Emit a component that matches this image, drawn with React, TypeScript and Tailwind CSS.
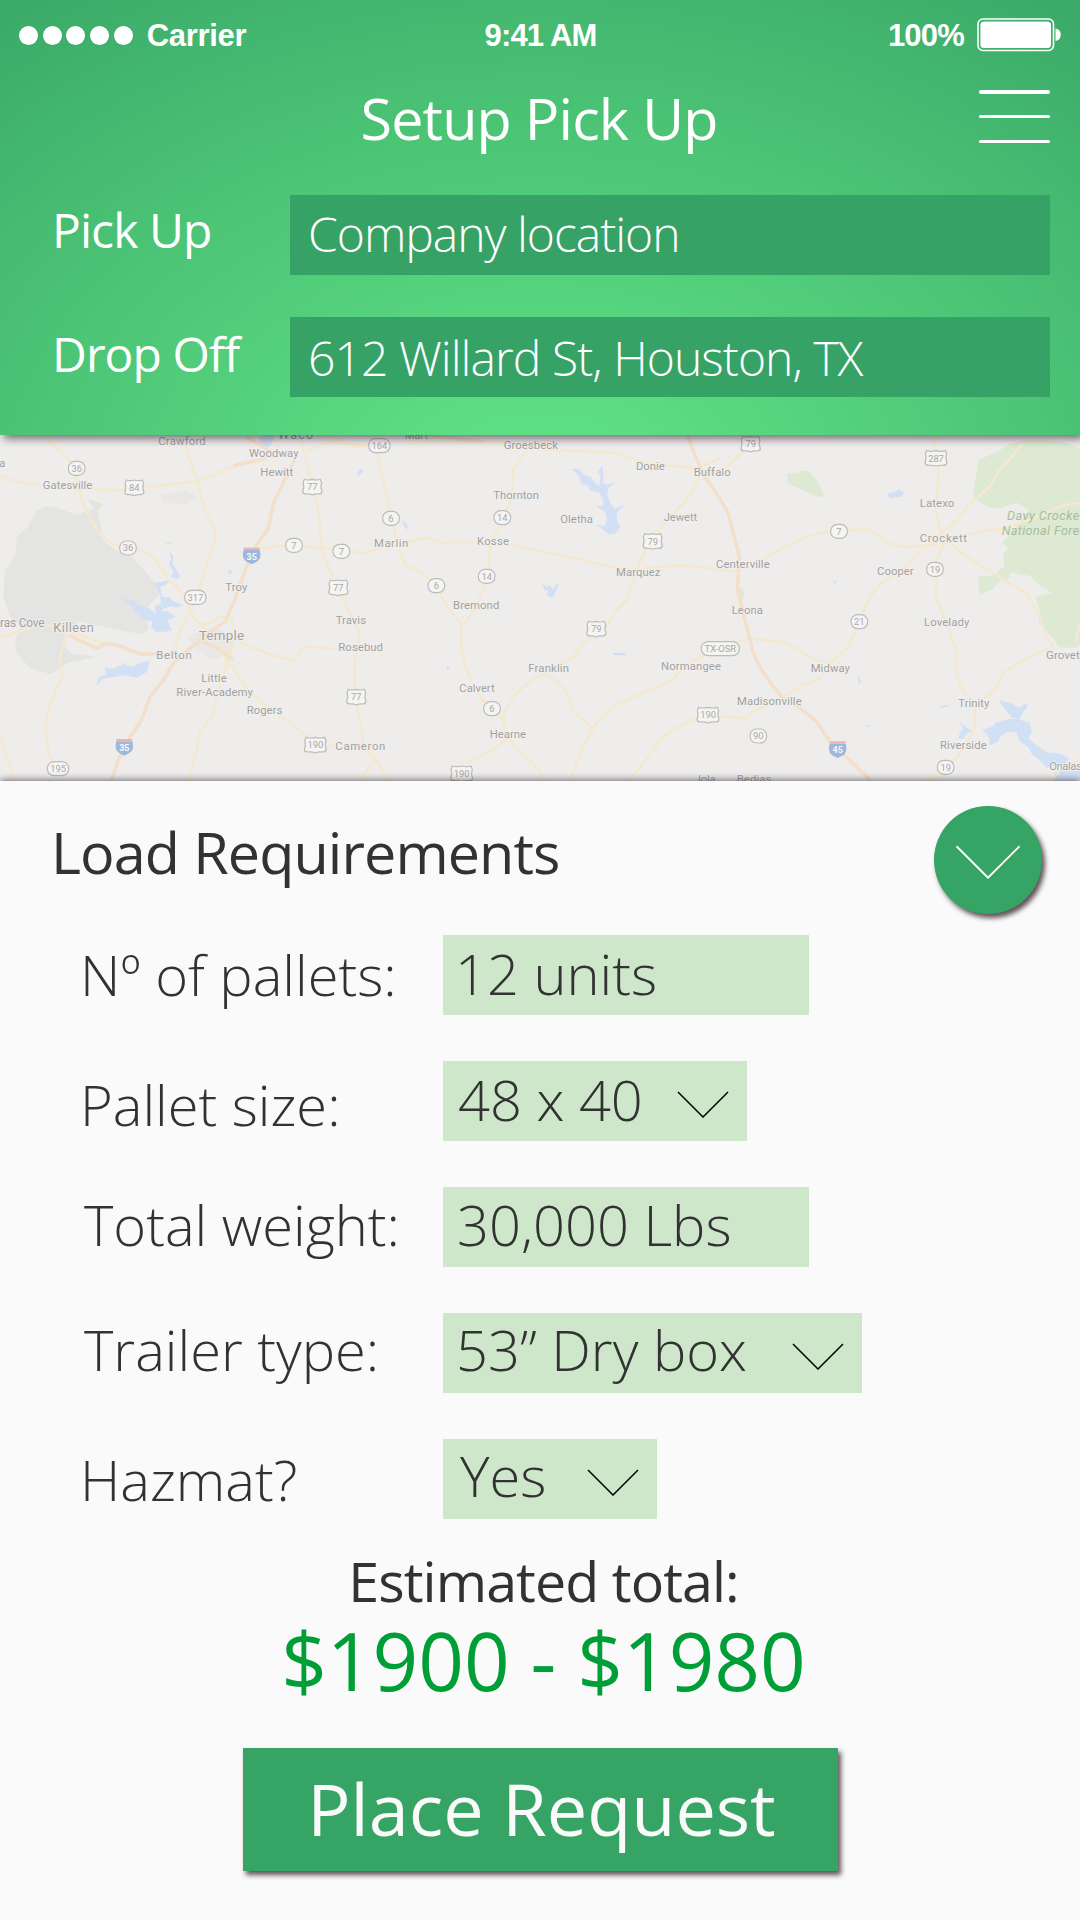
import React from "react";

type Label = [x: number, baseline: number, width: number, text: string, size?: number];
type Badge = [x: number, y: number, text: string, kind: "us" | "state" | "interstate"];

/* Map geometry is kept on a canvas three times the size of the visible map. */
const LABELS: Label[] = [
  [-30, 112, 46, "ina", 33],
  [475, 44, 142, "Crawford"],
  [834, 28, 106, "Waco", 38],
  [747, 82, 149, "Woodway"],
  [781, 138, 99, "Hewitt"],
  [128, 176, 149, "Gatesville"],
  [676, 482, 66, "Troy"],
  [-100, 592, 234, "Copperas Cove", 36],
  [160, 605, 121, "Killeen", 38],
  [597, 630, 135, "Temple", 40],
  [469, 688, 106, "Belton"],
  [604, 756, 76, "Little"],
  [529, 798, 230, "River-Academy"],
  [740, 851, 107, "Rogers"],
  [1007, 581, 91, "Travis"],
  [1015, 662, 134, "Rosebud"],
  [1006, 959, 150, "Cameron"],
  [1122, 350, 103, "Marlin"],
  [1214, 28, 70, "Mart"],
  [1511, 56, 163, "Groesbeck"],
  [1480, 208, 137, "Thornton"],
  [1431, 346, 96, "Kosse"],
  [1359, 538, 139, "Bremond"],
  [1378, 787, 106, "Calvert"],
  [1469, 923, 109, "Hearne"],
  [1585, 725, 122, "Franklin"],
  [1681, 280, 98, "Oletha"],
  [1848, 438, 133, "Marquez"],
  [1908, 120, 86, "Donie"],
  [1991, 274, 101, "Jewett"],
  [2081, 139, 111, "Buffalo"],
  [2148, 413, 161, "Centerville"],
  [2195, 552, 94, "Leona"],
  [1983, 721, 180, "Normangee"],
  [2432, 725, 118, "Midway"],
  [2211, 826, 194, "Madisonville"],
  [2094, 1060, 53, "Iola"],
  [2210, 1060, 104, "Bedias"],
  [2759, 230, 104, "Latexo"],
  [2759, 335, 142, "Crockett"],
  [2631, 435, 110, "Cooper"],
  [2772, 589, 136, "Lovelady"],
  [2875, 832, 93, "Trinity"],
  [2820, 958, 140, "Riverside"],
  [3138, 687, 140, "Groveton", 35],
  [3148, 1020, 130, "Onalaska"],
];

const BADGES: Badge[] = [
  [230, 115, "36", "state"],
  [403, 173, "84", "us"],
  [937, 171, "77", "us"],
  [384, 354, "36", "state"],
  [882, 346, "7", "state"],
  [1024, 364, "7", "state"],
  [586, 502, "317", "state"],
  [1015, 473, "77", "us"],
  [1069, 801, "77", "us"],
  [946, 945, "190", "us"],
  [174, 1016, "195", "state"],
  [755, 376, "35", "interstate"],
  [373, 950, "35", "interstate"],
  [1138, 47, "164", "state"],
  [1173, 265, "6", "state"],
  [1507, 263, "14", "state"],
  [1460, 439, "14", "state"],
  [1309, 467, "6", "state"],
  [1476, 836, "6", "state"],
  [1385, 1031, "190", "us"],
  [1789, 597, "79", "us"],
  [1958, 334, "79", "us"],
  [2252, 42, "79", "us"],
  [2161, 656, "TX-OSR", "state"],
  [2124, 855, "190", "us"],
  [2275, 918, "90", "state"],
  [2513, 957, "45", "interstate"],
  [2517, 304, "7", "state"],
  [2578, 575, "21", "state"],
  [2808, 85, "287", "us"],
  [2805, 418, "19", "state"],
  [2837, 1012, "19", "state"],
];

const ROADS = [
  "M140 25L190 72L215 100L240 190Q258 250 280 280Q300 325 358 350Q430 350 470 392L505 450Q545 475 560 520L580 560L610 590L660 640L680 690L700 715L750 790L850 865L930 925L1010 952",
  "M-5 135Q60 163 110 162L240 178L370 180L440 172L590 154L705 108",
  "M555 45L590 150L618 250Q650 290 645 330L600 470L570 545Q540 590 530 640L520 690",
  "M570 545L600 585L640 575L655 560L695 565L705 620L690 680L675 720L650 800L635 860L598 910L590 960L565 1050",
  "M-5 622L60 605L110 585L160 585L230 612L310 640",
  "M205 600L180 680L188 740Q140 830 138 890Q140 980 165 1000",
  "M0 920L45 1050",
  "M905 35L925 120Q960 220 962 330Q975 400 1005 450Q1040 540 1080 610L1065 690L1065 790L1085 900L1090 950L1130 990L1160 1050M1130 990L1080 1045",
  "M780 358Q830 343 880 347L970 355L1090 370L1150 352L1230 335L1280 322L1320 338L1460 337L1540 346L1650 370L1740 388L1830 410L1900 418L2050 406L2200 424L2300 383Q2380 325 2490 303L2610 298L2660 335Q2700 360 2790 345L2850 335",
  "M720 638Q800 675 880 692L910 650L1030 658L1150 665",
  "M920 65L980 38Q1060 38 1120 50Q1140 80 1150 160L1170 240L1195 350L1215 405Q1280 430 1310 470Q1340 540 1384 580Q1378 660 1400 720L1420 770L1480 850L1510 870L1520 920L1560 965L1600 1000L1635 1050",
  "M980 15L1070 50L1130 45M1220 40L1480 35L1640 60L1840 68L1940 100L2090 115L2160 85",
  "M1590 45L1540 120L1535 210L1510 260L1470 340L1465 430L1430 530L1390 585",
  "M2170 120L2100 140L2060 210L1990 280L1950 330L1910 420L1880 510L1850 540L1820 590L1750 640L1720 680L1640 730L1600 745L1550 790Q1510 840 1510 870",
  "M1640 735Q1710 770 1715 840L1780 895",
  "M1712 1050Q1740 960 1780 895Q1810 840 1880 810L2020 750L2060 700L2130 670L2160 655L2240 625L2350 635L2450 690L2490 700L2545 650L2580 570L2610 500L2650 455L2720 410L2780 350L2870 270L2900 230L2970 170L3000 120L3070 40",
  "M1400 1000L1470 965L1520 925",
  "M1890 1050L1960 960L1990 920Q2080 855 2140 858L2235 863L2260 845L2350 800L2400 770L2460 745L2490 700",
  "M2160 130L2240 55",
  "M2800 20L2815 120L2808 250L2830 340L2808 400L2808 500L2840 580L2868 660L2870 740Q2890 790 2925 820L2925 890L2900 940L2880 970L2820 1040L2780 1050",
  "M2850 340L2900 380L3030 460L3080 490Q3120 550 3135 610L3160 650L3090 680L3040 710L3010 725Q3000 780 2930 820",
  "M2840 340Q2900 305 3000 298L3120 260Q3180 220 3240 220M3240 580L3225 640",
  "M3240 990L3180 1020L3160 1050",
];

const HIGHWAYS = [
  "M885 85L820 220L805 295L760 360L740 410L700 520L675 575L640 600L600 630L520 700L490 750L450 800L425 870L390 920L355 990L335 1050",
  "M205 615L290 655L320 640L350 645L420 672L480 672L540 680L600 630L660 660L700 690M700 108L800 85M740 20L820 70M1270 15L1450 35",
  "M2060 10Q2085 80 2115 140Q2170 220 2185 250L2218 380L2212 480L2235 570L2260 670Q2290 740 2345 800Q2400 830 2450 875L2500 950L2550 990L2610 1050",
];

const WATERS = [
  "M360 500L385 512L400 512L420 530L445 535L470 555L465 530L485 520L480 490L465 460L490 455L508 450L500 462L480 470L485 500L510 505L520 515L548 525L525 532L510 528L490 535L480 545L500 545L525 560L500 570L515 600L490 605L465 603L455 590L460 575L430 565L405 545L395 525Z",
  "M510 365L520 380L515 400L525 415L540 440L530 447L515 440L522 425L508 405L514 385Z",
  "M290 765L300 740L320 735L315 715L340 718L370 705L400 712L420 700L448 693L440 725L410 742L370 735L340 740L310 745Z",
  "M777 22l30-12 18 12-18 28-20 4zM1072 132l10-16 8 6-12 14zM683 424l12-4 2 6-8 6z",
  "M1208 272l12 14 4 12-12-10z",
  "M1717 118L1735 118L1752 135L1772 142L1782 158L1800 168L1803 140L1795 125L1806 108L1810 135L1808 160L1820 165L1842 158L1825 175L1820 195L1832 222L1842 238L1870 228L1850 248L1848 270L1860 290L1848 308L1828 312L1810 298L1790 285L1815 290L1822 270L1818 245L1790 230L1812 228L1810 205L1795 185L1770 180L1765 165L1745 160L1738 140Z",
  "M1628 462L1640 472L1650 466L1660 482L1665 466L1676 464L1668 480L1660 498L1650 502L1640 492L1648 484L1634 478Z",
  "M1838 670h38v5h-34zM1340 708l10 8-8 2z",
  "M2663 192l22-6 12-6 14 6-6 14-20 0-14 4zM2500 456l12-6-8 10zM2575 738l8 18-6 6zM2818 830l30-5-20 8zM2600 886l12 0-6 6z",
  "M2876 925L2882 905L2890 898L2882 878L2895 890L2915 902L2900 910L2890 925Z",
  "M2998 812L3038 822L3055 834L3078 822L3082 828L3066 850L3058 868L3035 862L3020 842Z",
  "M2948 900L2975 892L2990 878L3030 868L3060 870L3088 880L3094 905L3085 925L3105 945L3140 968L3180 972L3205 985L3190 1010L3165 1006L3140 1012L3120 990L3098 975L3085 950L3060 932L3050 905L3020 905L3000 918L2992 935L2970 945L2968 920Z",
  "M3166 1028l74-20v44h-80z",
];

const PARKS = [
  "M2935 90l60-26 30-22 60-12 100 4 55 20v588l-12 12-50-2-24-34-38-36 4-40-14-40 50-14-36-20-30-30-50-10-26-10-4-48 14-12-16-22 30-30 26-36 22-30-34-22-50 16-38-2-46-28z",
  "M2362 128l30 2 8-8 26 0 14 18 18 22 14 36-20 4-40-20-24-10-24-10zM2933 440l52-4 18-22 30 0-6 32-28 6-20 26-40 16zM2217 470l14 10v28l-14 0z",
  "M262 206l48 16-16 18-18-12zM490 338l28-6-6 12zM336 716l44-20-8 20z",
];

function RoadBadge({ badge }: { badge: Badge }) {
  const [x, y, text, kind] = badge;
  if (kind === "interstate") {
    return (
      <g transform={`translate(${x} ${y})`}>
        <path d="M-24-16H24Q32 10 14 20L0 27L-14 20Q-32 10-24-16Z" fill="#9db7de" />
        <path d="M-24-23H24V-16H-24Z" fill="#edb3af" />
        <text y="13" textAnchor="middle" fill="#f6f7fa" fontSize="27" fontWeight="700">{text}</text>
      </g>
    );
  }
  const half = text.length === 6 ? 57 : text.length === 3 ? 32 : kind === "us" ? 28 : 25;
  return (
    <g transform={`translate(${x} ${y})`}>
      {kind === "state" ? (
        <rect x={-half} y="-21" width={half * 2} height="42" rx="20" fill="#f4f4f3" stroke="#bdbcbb" strokeWidth="3.5" />
      ) : (
        <path
          d={`M${-half + 4}-23Q-14-19 0-23Q14-19 ${half - 4}-23L${half}-12Q${half - 5} 0 ${half + 1} 13Q${half} 21 ${half - 10} 21Q8 20 0 24Q-8 20 ${-half + 10} 21Q${-half} 21 ${-half - 1} 13Q${-half + 5} 0 ${-half}-12Z`}
          fill="#f4f4f3"
          stroke="#bdbcbb"
          strokeWidth="3.5"
        />
      )}
      <text y="10" textAnchor="middle" fill="#aaa9a8" fontSize="28">{text}</text>
    </g>
  );
}

function RouteMap() {
  return (
    <svg className="block h-full w-full" viewBox="0 5 1080 346" fontFamily="Roboto, sans-serif">
      <g transform="scale(.333333)">
        <path d="M110 240L140 228L180 236L230 255L290 232L300 275L310 330L345 360L395 380L440 430L465 460L480 490L440 535L445 600L420 612L300 588L240 575L200 600L190 640L210 670L290 680L200 700L170 722L150 732L90 715L50 670L45 630L65 585L30 560L10 500L15 420L45 380L50 320L85 290Z" fill="#e4e4e3" />
        <path d="M480 195L560 180L595 205L550 225L490 215ZM560 620L640 590L700 620L690 670L640 690L590 660Z" fill="#e9e8e7" />
        {PARKS.map((d) => <path key={d} d={d} fill="#dee9d3" />)}
        {WATERS.map((d) => <path key={d} d={d} fill="#d1e0f4" stroke="#d1e0f4" strokeWidth="2" strokeLinejoin="round" />)}
        {ROADS.map((d) => <path key={d} d={d} fill="none" stroke="#f4e9ce" strokeWidth="7.5" strokeLinejoin="round" />)}
        {HIGHWAYS.map((d) => <path key={d} d={d} fill="none" stroke="#f3dfca" strokeWidth="10.5" strokeLinejoin="round" />)}
        {BADGES.map((b) => <RoadBadge key={`${b[0]}-${b[1]}`} badge={b} />)}
        <g fill="#a1a09f" stroke="#f1f0ef" strokeWidth="5" paintOrder="stroke">
          {LABELS.map(([x, y, width, text, size = 34]) => (
            <text key={text} x={x} y={y} textLength={width} fontSize={size}>{text}</text>
          ))}
        </g>
        <g fill="#a5bd9b" fontSize="38" fontStyle="italic">
          <text x="3021" y="270" textLength="244">Davy Crockett</text>
          <text x="3005" y="316" textLength="266">National Forest</text>
        </g>
      </g>
    </svg>
  );
}

function Chevron({ className }: { className: string }) {
  return (
    <svg className={className} viewBox="0 0 52 27" fill="none" stroke="currentColor">
      <path d="M1 1L26 26L51 1" strokeWidth="1.5" />
    </svg>
  );
}

const ADDRESS_ROWS = [
  { label: "Pick Up", value: "Company location", labelClass: "leading-[70px]", valueClass: "leading-[78px] tracking-[-1.02px]" },
  { label: "Drop Off", value: "612 Willard St, Houston, TX", labelClass: "leading-[74px]", valueClass: "leading-[81px] tracking-[-0.94px]" },
];

const LOAD_ROWS = [
  { label: "Nº of pallets:", value: "12 units", select: false, labelClass: "pl-[80px] leading-[78px]", fieldClass: "w-[366px] pl-[12px] leading-[76px]" },
  { label: "Pallet size:", value: "48 x 40", select: true, labelClass: "pl-[80px] leading-[87px]", fieldClass: "w-[304px] pl-[15px] leading-[76px]" },
  { label: "Total weight:", value: "30,000 Lbs", select: false, labelClass: "pl-[84px] leading-[75px]", fieldClass: "w-[366px] pl-[14px] leading-[74px]" },
  { label: "Trailer type:", value: "53” Dry box", select: true, labelClass: "pl-[84px] leading-[73px]", fieldClass: "w-[419px] pl-[13px] leading-[73px]" },
  { label: "Hazmat?", value: "Yes", select: true, labelClass: "pl-[80px] leading-[81px]", fieldClass: "w-[214px] pl-[17px] leading-[73px]" },
];

function StatusBar() {
  return (
    <div className="grid h-[70px] grid-cols-3 items-center font-['Liberation_Sans',Arial,sans-serif] text-[31px] font-bold">
      <div className="flex items-center pl-[19px]">
        <div className="flex gap-[4.7px]">
          {[0, 1, 2, 3, 4].map((dot) => <span key={dot} className="size-[19px] rounded-full bg-white" />)}
        </div>
        <span className="pt-[2px] pl-[14px] tracking-[-0.3px]">Carrier</span>
      </div>
      <span className="pt-[2px] pl-px text-center tracking-[-0.8px]">9:41 AM</span>
      <div className="flex items-center justify-end pr-[19px]">
        <span className="pt-[2px] tracking-[-0.8px]">100%</span>
        <svg className="ml-[13px] h-[34px] w-[84px]" viewBox="0 0 84 34">
          <rect x="1" y="1" width="75.5" height="31.5" rx="5" fill="none" stroke="white" strokeWidth="1.6" />
          <rect x="3.4" y="3.4" width="70.6" height="26.7" rx="3.5" fill="white" />
          <path d="M78.5 10.5a6.4 6.4 0 0 1 0 12.6z" fill="white" />
        </svg>
      </div>
    </div>
  );
}

export default function App() {
  return (
    <main className="flex h-[1920px] w-[1080px] flex-col overflow-hidden bg-[#fafafa] font-['Open_Sans',sans-serif] text-[#323232]">
      <header className="relative z-10 h-[435px] shrink-0 bg-[radial-gradient(ellipse_896px_640px_at_540px_500px,#63e588_0%,#4cc576_57%,#3aa868_100%)] text-white shadow-[4px_4px_8px_rgba(30,10,20,0.55)]">
        <StatusBar />
        <div className="grid h-[125px] grid-cols-[1fr_auto_1fr]">
          <h1 className="col-start-2 pr-[2px] text-[57.5px] leading-[97px] font-normal tracking-[-0.9px]">Setup Pick Up</h1>
          <button aria-label="Menu" className="mt-[20px] mr-[30px] flex h-[53px] w-[71px] flex-col justify-between justify-self-end">
            <span className="h-[3.5px] w-full rounded-full bg-white" />
            <span className="h-[3.5px] w-full rounded-full bg-white" />
            <span className="h-[3.5px] w-full rounded-full bg-white" />
          </button>
        </div>
        <div className="flex flex-col gap-[42px]">
          {ADDRESS_ROWS.map((row) => (
            <div key={row.label} className="grid h-[80px] grid-cols-[290px_760px] grid-rows-[80px] text-[48px] whitespace-nowrap">
              <span className={`pl-[52px] tracking-[-0.95px] ${row.labelClass}`}>{row.label}</span>
              <span className={`h-[80px] bg-[#37a266] pl-[18px] font-light ${row.valueClass}`}>{row.value}</span>
            </div>
          ))}
        </div>
      </header>

      <section className="h-[346px] shrink-0 overflow-hidden bg-[#eeedec]">
        <RouteMap />
      </section>

      <section className="relative flex flex-1 flex-col shadow-[0_-1px_7px_rgba(20,10,15,0.6)]">
        <div className="flex h-[154px] items-start justify-between pr-[38px] pl-[51px]">
          <h2 className="pt-[42px] text-[57.5px] leading-[59px] tracking-[-0.9px]">Load Requirements</h2>
          <button aria-label="Collapse" className="mt-[25px] flex size-[108px] items-center justify-center rounded-full bg-[#35a465] pt-[4px] text-white shadow-[3px_4px_5px_rgba(30,10,20,0.7)]">
            <Chevron className="h-[34px] w-[66px]" />
          </button>
        </div>

        <div className="flex flex-col gap-[46px] text-[56px] font-light whitespace-nowrap">
          {LOAD_ROWS.map((row) => (
            <div key={row.label} className="grid h-[80px] grid-cols-[443px_auto] grid-rows-[80px] justify-start">
              <span className={row.labelClass}>{row.label}</span>
              <div className={`flex h-[80px] items-start justify-between bg-[#cee7cb] pr-[18px] ${row.fieldClass}`}>
                <span>{row.value}</span>
                {row.select && <Chevron className="mt-[30px] h-[27px] w-[52px] text-black" />}
              </div>
            </div>
          ))}
        </div>

        <div className="mt-[33px] flex flex-col items-center pl-[7px]">
          <p className="text-[55.5px] leading-[58px] tracking-[-0.9px]">Estimated total:</p>
          <p className="text-[80px] leading-[99px] text-[#009e36]">$1900 - $1980</p>
        </div>
        <button className="mt-[39px] ml-[243px] flex h-[123px] w-[595px] items-start justify-center bg-[#35a465] pl-[2px] text-[72px] leading-[120px] text-[#fafafa] shadow-[3px_4px_5px_rgba(30,10,20,0.7)]">
          Place Request
        </button>
      </section>
    </main>
  );
}
